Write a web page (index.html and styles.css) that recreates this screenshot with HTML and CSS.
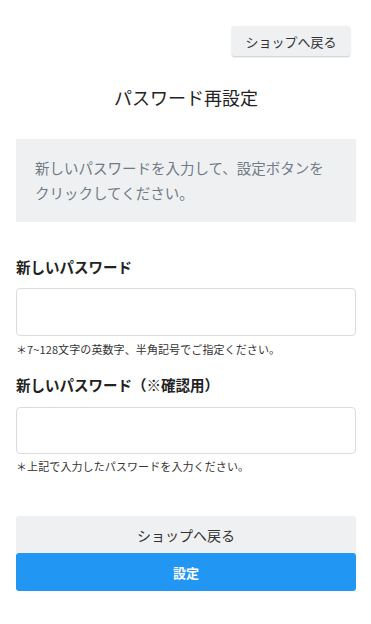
FILE: index.html
```html
<!DOCTYPE html>
<html lang="ja">
<head>
<meta charset="utf-8">
<title>パスワード再設定</title>
<link rel="stylesheet" href="styles.css">
</head>
<body>
<div class="page">
  <div class="topbar">
    <button class="btn-back-small">ショップへ戻る</button>
  </div>
  <h1 class="title">パスワード再設定</h1>
  <div class="info">新しいパスワードを入力して、設定ボタンをクリックしてください。</div>
  <label class="label label-1">新しいパスワード</label>
  <input class="input input-1" type="password">
  <p class="hint hint-1">＊7~128文字の英数字、半角記号でご指定ください。</p>
  <label class="label label-2">新しいパスワード（※確認用）</label>
  <input class="input input-2" type="password">
  <p class="hint hint-2">＊上記で入力したパスワードを入力ください。</p>
  <div class="actions">
    <button class="btn btn-grey">ショップへ戻る</button>
    <button class="btn btn-blue">設定</button>
  </div>
</div>
</body>
</html>
```
FILE: styles.css
```css
* { box-sizing: border-box; }
html, body { margin: 0; padding: 0; background: #fff; }
body {
  font-family: "Noto Sans CJK JP", "Noto Sans", sans-serif;
  color: #333;
}
.page { padding: 0 15px 0 16px; display: flex; flex-direction: column; }
.topbar { display: flex; justify-content: flex-end; padding-top: 26px; padding-right: 6px; }
.btn-back-small {
  width: 118px; height: 30px;
  background: #eef0f2; border: none; border-radius: 2px;
  box-shadow: 0 1px 2px rgba(0,0,0,0.22);
  font-family: inherit; font-size: 13px; color: #333;
  padding: 0;
}
.title {
  margin: 29px 0 0; text-align: center;
  font-size: 18px; font-weight: normal; line-height: 24px; color: #222;
}
.info {
  margin-top: 30px; background: #eef0f2;
  padding: 16px 19px 17px;
  font-size: 14.5px; line-height: 25px; color: #707b86;
}
.label {
  display: block; font-size: 14.5px; font-weight: bold; line-height: 22px; color: #222;
}
.label-1 { margin-top: 34px; }
.label-2 { margin-top: 17px; }
.input {
  display: block; width: 100%;
  border: 1px solid #dcdcdc; border-radius: 4px; background: #fff;
  box-shadow: inset 0 0 1px rgba(0,0,0,0.05);
}
.input-1 { margin-top: 10px; height: 48px; }
.input-2 { margin-top: 11px; height: 47px; }
.hint { margin: 0; font-size: 11px; line-height: 16px; color: #333; letter-spacing: 0.1px; }
.hint-1 { margin-top: 5px; }
.hint-2 { margin-top: 4px; }
.actions { margin-top: 42px; display: flex; flex-direction: column; }
.btn {
  width: 100%; border: none; font-family: inherit; padding: 0;
}
.btn-grey {
  height: 37px; background: #eef0f2; color: #333; font-size: 14px;
  border-radius: 3px 3px 0 0;
}
.btn-blue {
  height: 38px; background: #2196f3; color: #fff; font-size: 13px; font-weight: bold;
  border-radius: 3px;
}
```
